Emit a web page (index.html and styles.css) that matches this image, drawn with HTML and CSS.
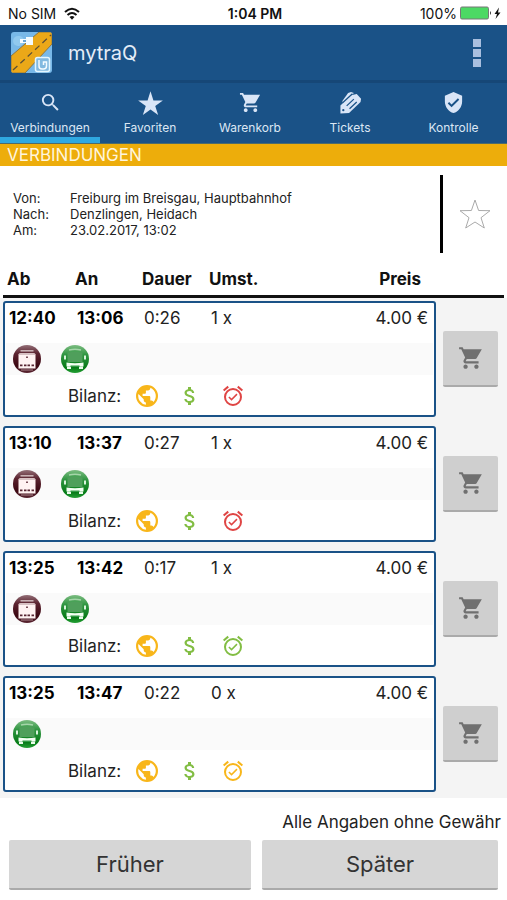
FILE: index.html
```html
<!DOCTYPE html>
<html lang="de">
<head>
<meta charset="utf-8">
<meta name="viewport" content="width=device-width, initial-scale=1">
<title>mytraQ</title>
<link rel="stylesheet" href="styles.css">
</head>
<body>
<svg class="sprite" aria-hidden="true">
  <defs>
    <linearGradient id="maroon" x2="0" y2="1"><stop stop-color="#947078"/><stop offset=".3" stop-color="#5c2430"/><stop offset=".75" stop-color="#3b0711"/><stop offset="1" stop-color="#5b2733"/></linearGradient>
    <linearGradient id="green" x2="0" y2="1"><stop stop-color="#7dbd82"/><stop offset=".35" stop-color="#2f9541"/><stop offset=".8" stop-color="#067b17"/><stop offset="1" stop-color="#25a035"/></linearGradient>
  </defs>
  <symbol id="cart" viewBox="0 0 24 24"><path d="M7 18c-1.100 0-2 .9-2 2s.9 2 2 2 2-.9 2-2-.9-2-2-2zM1 2v2h2l3.600 7.590-1.350 2.450c-.16.280-.25.610-.25.960 0 1.100.9 2 2 2h12v-2H7.420c-.14 0-.25-.11-.25-.25l.03-.12.900-1.630h7.450c.75 0 1.410-.41 1.750-1.030L22 4H5.210l-.94-2H1zm16 16c-1.100 0-2 .9-2 2s.9 2 2 2 2-.9 2-2-.9-2-2-2z"/></symbol>
  <symbol id="train" viewBox="0 0 28 28">
    <circle cx="14" cy="14" r="14" fill="url(#maroon)"/>
    <path d="M7.500 5.800h13" stroke="#ceb8bb" stroke-width="1.500"/>
    <path d="M5.500 9.500q0-1.500 2-1.500h13q2 0 2 1.500v14h-17z" fill="#fff3f2"/>
    <path d="M6 9h16" stroke="#b08f94"/>
    <path d="M13.200 11.500h1.600V13h-1.600zM7 19.500h2.500v1.700H7zm4 0h2.500v1.700H11zm3.500 0H17v1.700h-2.500zm4 0H21v1.700h-2.500z" fill="#572531"/>
    <path d="M8 25h12" stroke="#ad8a90"/>
  </symbol>
  <symbol id="bus" viewBox="0 0 28 28">
    <circle cx="14" cy="14" r="14" fill="url(#green)"/>
    <path d="M8 5q6-1.500 12 0" fill="none" stroke="#a5d5a9" stroke-width="1.300"/>
    <path d="M6.500 7.500q7.500-1.500 15 0V17h-15z" fill="#4f9f5b"/>
    <path d="M3 10.500h2v4H3zm20 0h2v4h-2z" fill="#d9f3dc"/>
    <path d="M5.500 17.500q8.500 1.500 17 0v4h-17z" fill="#f3fff3"/>
    <path d="M6 21.500h4V24H6zm12 0h4V24h-4z" fill="#e9fbea"/>
    <path d="M9.500 20.500h9v1.500h-9z" fill="#309943"/>
  </symbol>
  <symbol id="globe" viewBox="0 0 24 24"><path d="M12 1a11 11 0 1 0 0 22 11 11 0 0 0 0-22zm-1.100 19.730A8.800 8.800 0 0 1 3.450 10l5.250 5.260v1.100c0 1.200 1 2.200 2.200 2.200v2.170zM18.500 17.900a2.200 2.200 0 0 0-2.100-1.500h-1.100v-3.300c0-.6-.5-1.100-1.100-1.100H7.600V9.800h2.200c.6 0 1.100-.5 1.100-1.100V6.500h2.200c1.200 0 2.200-1 2.200-2.200v-.45A8.800 8.800 0 0 1 18.500 17.900z"/></symbol>
  <symbol id="dollar" viewBox="0 0 24 24"><path d="M11.800 10.900c-2.270-.59-3-1.200-3-2.150 0-1.090 1.010-1.850 2.700-1.850 1.780 0 2.440.85 2.500 2.100h2.210c-.07-1.720-1.120-3.300-3.210-3.810V3h-3v2.160c-1.940.42-3.500 1.680-3.500 3.610 0 2.310 1.910 3.460 4.700 4.130 2.500.6 3 1.480 3 2.410 0 .69-.49 1.790-2.700 1.790-2.060 0-2.870-.92-2.980-2.100h-2.200c.12 2.190 1.760 3.420 3.680 3.830V21h3v-2.150c1.950-.37 3.500-1.500 3.500-3.550 0-2.840-2.430-3.810-4.700-4.400z"/></symbol>
  <symbol id="alarm" viewBox="0 0 24 24"><path d="M22 5.720l-4.600-3.860-1.290 1.530 4.600 3.860L22 5.720zM7.880 3.390L6.600 1.860 2 5.710l1.290 1.530 4.590-3.850zM12 4a9 9 0 1 0 0 18 9 9 0 0 0 0-18zm0 16a7 7 0 1 1 0-14 7 7 0 0 1 0 14zm-1.460-5.470L8.410 12.400l-1.060 1.060 3.180 3.180 6-6-1.060-1.060-4.930 4.950z"/></symbol>
</svg>

<div class="status">
  <span class="carrier">No SIM
    <svg class="wifi" viewBox="0 0 16 13"><g fill="none" stroke="#111" stroke-width="2"><path d="M1 5q7-6.500 14 0M3.500 8q4.500-4 9 0"/></g><path d="M5.500 10q2.500-2 5 0L8 12.800z" fill="#111"/></svg>
  </span>
  <span class="clock">1:04 PM</span>
  <span class="power">100%
    <svg class="battery" viewBox="0 0 42 14"><rect x=".5" y="1" width="28" height="12" rx="1.500" fill="#4cd964" stroke="#777"/><path d="M30 5q2 2 0 4z" fill="#333"/><path d="M39 1.500L34.500 8H37l-1.500 5 5-6.500H38z" fill="#111"/></svg>
  </span>
</div>

<header class="appbar">
  <svg class="logo" viewBox="0 0 41 41">
    <clipPath id="round"><rect width="41" height="41" rx="3"/></clipPath>
    <g clip-path="url(#round)">
      <rect width="41" height="41" fill="#78b8e8"/>
      <path d="M0 24L28 0h13v12L14 41H0z" fill="#eba818" stroke="#8e7740"/>
      <path d="M2 38L40 3" stroke="#5e5135" stroke-width="1.300" stroke-dasharray="6 4"/>
      <rect x="2" y="4" width="11" height="10" rx="5" fill="#91c9ef"/>
      <path d="M9 7h6V5h7v8h-7v-2H9z" fill="#f4fbff"/><path d="M12 8h3v2h-3z" fill="#69a5d3"/>
      <rect x="24.500" y="25.500" width="14" height="14" rx="2" fill="#82b9e0" stroke="#e4f6ff" stroke-width="1.500"/>
      <path d="M28 28v6q0 3 3 3h1.500q3 0 3-3v-4h-3v3" fill="none" stroke="#f4fbff" stroke-width="1.500"/>
    </g>
  </svg>
  <h1>mytraQ</h1>
  <button class="more" aria-label="Mehr"><i></i><i></i><i></i></button>
</header>

<nav class="tabs">
  <a href="#" class="active"><svg viewBox="0 0 24 24"><path d="M15.500 14h-.79l-.28-.27A6.470 6.470 0 0 0 16 9.500 6.500 6.500 0 1 0 9.500 16c1.610 0 3.090-.59 4.230-1.570l.27.28v.79l5 4.990L20.490 19l-4.990-5zm-6 0a4.500 4.500 0 1 1 0-9 4.500 4.500 0 0 1 0 9z"/></svg>Verbindungen</a>
  <a href="#"><svg class="large" viewBox="0 0 24 24"><path d="M12 17.300L18.800 22.300 16.200 14.300 23 9.300 14.600 9.300 12 1 9.400 9.300 1 9.300 7.800 14.300 5.200 22.300z"/></svg>Favoriten</a>
  <a href="#"><svg viewBox="0 0 24 24"><use href="#cart"/></svg>Warenkorb</a>
  <a href="#"><svg viewBox="0 0 24 24"><path d="M1.500 15L12.500 4.500l6-1.500L23 8l-.5 3.500L10.500 23l-9 .5z"/><path d="M3.500 10.500L9.500 2l3-1 3 1-11.500 11z"/><path d="M3.500 12.500L14 2.800M8 15.500l7.500-7M11 18.500l7.500-7" fill="none" stroke="#1a5287" stroke-width="1.300"/><circle cx="4.500" cy="20" r="1.200" fill="#1a5287"/></svg>Tickets</a>
  <a href="#"><svg viewBox="0 0 24 24"><path d="M12 1L3 5v6c0 5.550 3.840 10.740 9 12 5.160-1.260 9-6.450 9-12V5l-9-4zm-2 16l-4-4 1.410-1.410L10 14.170l6.590-6.590L18 9l-8 8z"/></svg>Kontrolle</a>
</nav>

<main>
  <h2>VERBINDUNGEN</h2>
  <section class="query">
    <dl>
      <dt>Von:</dt><dd>Freiburg im Breisgau, Hauptbahnhof</dd>
      <dt>Nach:</dt><dd>Denzlingen, Heidach</dd>
      <dt>Am:</dt><dd>23.02.2017, 13:02</dd>
    </dl>
    <button class="favorite" aria-label="Favorit"><svg viewBox="0 0 32 32"><path d="M16 2l3.600 10.500L31 12.700l-9 7L25.300 30 16 24 6.700 30 10 19.700l-9-7 11.400-.2z"/></svg></button>
  </section>

  <table>
    <thead><tr><th>Ab</th><th>An</th><th>Dauer</th><th>Umst.</th><th>Preis</th></tr></thead>
    <tbody>
      <tr>
        <td class="time">12:40</td><td class="time">13:06</td><td>0:26</td><td>1 x</td><td class="price">4.00 €</td>
        <td class="modes"><svg><use href="#train"/></svg><svg><use href="#bus"/></svg></td>
        <td class="balance">Bilanz:<svg class="amber"><use href="#globe"/></svg><svg class="lime"><use href="#dollar"/></svg><svg class="red"><use href="#alarm"/></svg></td>
        <td class="buy"><button aria-label="In den Warenkorb"><svg><use href="#cart"/></svg></button></td>
      </tr>
      <tr>
        <td class="time">13:10</td><td class="time">13:37</td><td>0:27</td><td>1 x</td><td class="price">4.00 €</td>
        <td class="modes"><svg><use href="#train"/></svg><svg><use href="#bus"/></svg></td>
        <td class="balance">Bilanz:<svg class="amber"><use href="#globe"/></svg><svg class="lime"><use href="#dollar"/></svg><svg class="red"><use href="#alarm"/></svg></td>
        <td class="buy"><button aria-label="In den Warenkorb"><svg><use href="#cart"/></svg></button></td>
      </tr>
      <tr>
        <td class="time">13:25</td><td class="time">13:42</td><td>0:17</td><td>1 x</td><td class="price">4.00 €</td>
        <td class="modes"><svg><use href="#train"/></svg><svg><use href="#bus"/></svg></td>
        <td class="balance">Bilanz:<svg class="amber"><use href="#globe"/></svg><svg class="lime"><use href="#dollar"/></svg><svg class="lime"><use href="#alarm"/></svg></td>
        <td class="buy"><button aria-label="In den Warenkorb"><svg><use href="#cart"/></svg></button></td>
      </tr>
      <tr>
        <td class="time">13:25</td><td class="time">13:47</td><td>0:22</td><td>0 x</td><td class="price">4.00 €</td>
        <td class="modes"><svg><use href="#bus"/></svg></td>
        <td class="balance">Bilanz:<svg class="amber"><use href="#globe"/></svg><svg class="lime"><use href="#dollar"/></svg><svg class="amber"><use href="#alarm"/></svg></td>
        <td class="buy"><button aria-label="In den Warenkorb"><svg><use href="#cart"/></svg></button></td>
      </tr>
    </tbody>
  </table>

  <p class="notice">Alle Angaben ohne Gewähr</p>
  <div class="pager"><button>Früher</button><button>Später</button></div>
</main>
</body>
</html>
```
FILE: styles.css
```css
* { box-sizing: border-box; }
body { margin: 0; background: #fff; color: #222; font-family: Inter, "Liberation Sans", sans-serif; font-size: 17px; }
h1, h2, p, dl, dd { margin: 0; font-weight: 400; }
button { border: 0; padding: 0; font: inherit; color: inherit; background: none; cursor: pointer; }
svg { flex: none; }
.sprite { position: absolute; width: 0; height: 0; }

.status { display: grid; grid-template-columns: 1fr auto 1fr; align-items: center; height: 25px; padding: 1px 5px 0 8px; font-size: 14px; color: #111; }
.carrier, .power { display: flex; align-items: center; gap: 8px; }
.power { justify-content: flex-end; gap: 3px; }
.clock { font-weight: 600; }
.wifi { width: 16px; height: 13px; }
.battery { width: 42px; height: 14px; }

.appbar { display: flex; align-items: center; gap: 16px; height: 58px; padding: 0 26px 0 11px; background: #1a5287; border-bottom: 3px solid #164777; color: #e4edf7; }
.logo { width: 41px; height: 41px; }
.appbar h1 { flex: 1; padding-bottom: 0; font-size: 20px; line-height: 24px; }
.more { display: grid; gap: 2px; }
.more i { width: 8px; height: 8px; background: #a9bfdf; }

.tabs { display: grid; grid-template-columns: repeat(4, 100fr) 107fr; height: 61px; background: #1a5287; border-bottom: 1px solid #4d6b6b; }
.tabs a { display: flex; flex-direction: column; align-items: center; justify-content: flex-end; gap: 6px; padding-bottom: 1px; border-bottom: 6px solid transparent; color: #dce7f4; font-size: 12px; line-height: 16px; text-decoration: none; }
.tabs .active { border-color: #2fa8e0; }
.tabs svg { width: 23px; height: 23px; fill: #d9e5f7; }
.tabs .large { width: 27px; height: 27px; margin-bottom: -3px; }

h2 { padding-left: 7px; background: #edad0b; color: #fff5dc; font-size: 17px; line-height: 22px; }

.query { display: flex; align-items: stretch; padding: 9px 0; height: 96px; }
dl { flex: 1; display: grid; grid-template-columns: 57px 1fr; align-content: center; padding: 0 0 0 13px; border-right: 3px solid #000; font-size: 13px; line-height: 16px; }
.favorite { display: grid; place-items: center; width: 64px; }
.favorite svg { width: 32px; height: 32px; fill: #fff; stroke: #aaa; stroke-width: 1; }

table, thead, tbody { display: block; }
tr { display: grid; grid-template-columns: 68px 67px 67px 1fr auto 71px; padding-left: 3px; }
th, td { padding: 0; text-align: left; white-space: nowrap; }
thead { padding: 0 3px; }
thead tr { height: 36px; padding-left: 4px; border-bottom: 3px solid #111; color: #111; line-height: 34px; }
th { font-size: 17px; font-weight: 700; }
th:nth-child(5) { margin-right: 12px; }

tbody { display: grid; gap: 9px; padding: 3px 0 6px; background: #f4f4f4; }
tbody tr { grid-template-rows: 42px 32px 42px; }
tbody tr::before { content: ""; grid-area: 1 / 1 / 4 / 6; background: #fff; border: 2px solid #1a5287; border-radius: 3px; }
tbody td { grid-row: 1; padding: 6px 0 0 6px; line-height: 22px; }
td:nth-child(1) { grid-column: 1; }
td:nth-child(2) { grid-column: 2; }
td:nth-child(3) { grid-column: 3; }
td:nth-child(4) { grid-column: 4; }
td.price { grid-column: 5; padding-right: 8px; }
.time { color: #000; font-weight: 700; }
td.modes { grid-area: 2 / 1 / 3 / 6; display: flex; align-items: center; gap: 20px; margin: 0 3px; padding: 0 7px; background: #fafafa; }
.modes svg { width: 28px; height: 28px; }
td.balance { grid-area: 3 / 1 / 4 / 6; display: flex; align-items: center; gap: 19px; padding: 0 0 0 65px; }
.balance svg { width: 24px; height: 24px; }
.balance svg:first-child { margin-left: -5px; }
.amber { fill: #f8b61a; }
.lime { fill: #82bd43; }
.red { fill: #df4544; }
td.buy { grid-area: 1 / 6 / 4 / 7; display: grid; align-items: center; padding: 0 7px; }
.buy button { display: grid; place-items: center; width: 55px; height: 56px; background: #cfcfcf; border-bottom: 2px solid #aaa; border-radius: 2px; }
.buy svg { width: 26px; height: 26px; fill: #707070; }

.notice { padding: 13px 6px 7px; line-height: 22px; text-align: right; }
.pager { display: grid; grid-template-columns: 242fr 236fr; gap: 11px; padding: 0 9px; }
.pager button { height: 50px; background: #d6d6d6; border-bottom: 2px solid #aaa; border-radius: 2px; color: #333; font-size: 22px; }
```
